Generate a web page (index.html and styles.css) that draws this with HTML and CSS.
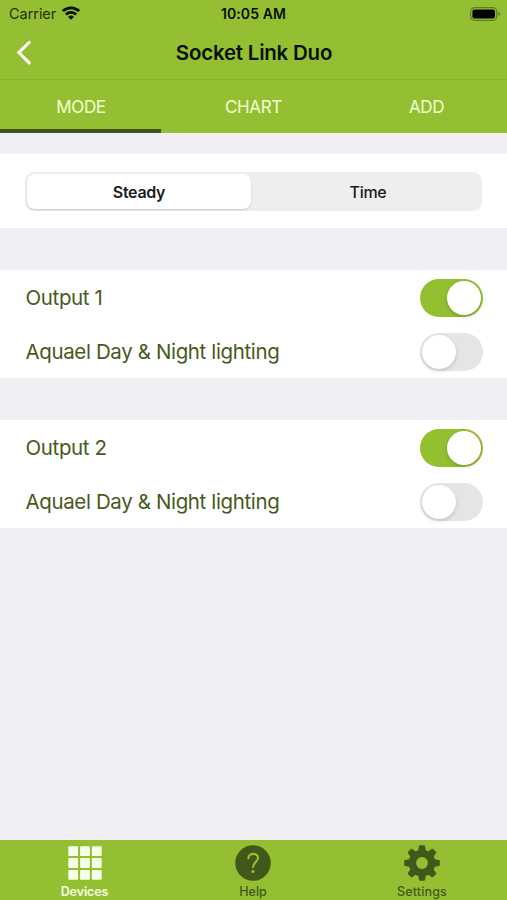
FILE: index.html
```html
<!DOCTYPE html>
<html lang="en">
<head>
<meta charset="utf-8">
<title>Socket Link Duo</title>
<link rel="stylesheet" href="styles.css">
</head>
<body>
<div class="app">
  <div class="status">
    <div class="carrier"><span>Carrier</span>
      <svg width="18" height="14" viewBox="0 0 18 14" fill="none" stroke="#071000" stroke-width="2.7"><path d="M.9 5.1a11.6 11.6 0 0 1 16.2 0M3.9 8.5a7.3 7.3 0 0 1 10.2 0"/><path d="M9 13.8 6.100 10.900a4.100 4.100 0 0 1 5.800 0z" fill="#071000" stroke="none"/></svg>
    </div>
    <div class="clock">10:05 AM</div>
    <svg class="battery" width="31" height="14" viewBox="0 0 31 14"><rect x=".7" y=".7" width="26" height="12.6" rx="3.8" fill="none" stroke="#607b22" stroke-width="1.2"/><rect x="2.4" y="2.4" width="22.6" height="9.2" rx="2" fill="#000"/><path d="M28.4 4.8c2.1.8 2.1 3.6 0 4.4z" fill="#607b22"/></svg>
  </div>
  <header class="nav">
    <svg class="back" width="18" height="26" viewBox="0 0 18 26" fill="none" stroke="#fff" stroke-width="3" stroke-linecap="round" stroke-linejoin="miter"><path d="M14.300 2.300 3.800 12.600 14.300 22.900"/></svg>
    <h1>Socket Link Duo</h1>
  </header>
  <nav class="tabs">
    <div class="tab active">MODE</div>
    <div class="tab">CHART</div>
    <div class="tab">ADD</div>
  </nav>
  <main>
    <section class="mode">
      <div class="segment"><div class="seg on">Steady</div><div class="seg time">Time</div></div>
    </section>
    <section class="group">
      <div class="row"><span>Output 1</span><i class="switch on"></i></div>
      <div class="row"><span>Aquael Day &amp; Night lighting</span><i class="switch"></i></div>
    </section>
    <section class="group">
      <div class="row"><span>Output 2</span><i class="switch on"></i></div>
      <div class="row"><span>Aquael Day &amp; Night lighting</span><i class="switch"></i></div>
    </section>
  </main>
  <footer class="bottom">
    <div class="item current">
      <svg width="36" height="36" viewBox="0 0 36 36" fill="currentColor"><rect x="1.3" y="1.3" width="9.8" height="9.8" rx="1"/><rect x="13.1" y="1.3" width="9.8" height="9.8" rx="1"/><rect x="24.9" y="1.3" width="9.8" height="9.8" rx="1"/><rect x="1.3" y="13.1" width="9.8" height="9.8" rx="1"/><rect x="13.1" y="13.1" width="9.8" height="9.8" rx="1"/><rect x="24.9" y="13.1" width="9.8" height="9.8" rx="1"/><rect x="1.3" y="24.9" width="9.8" height="9.8" rx="1"/><rect x="13.1" y="24.9" width="9.8" height="9.8" rx="1"/><rect x="24.9" y="24.9" width="9.8" height="9.8" rx="1"/></svg>
      <span class="devices">Devices</span>
    </div>
    <div class="item">
      <svg width="36" height="36" viewBox="0 0 36 36"><circle cx="18" cy="18" r="17.8" fill="currentColor"/><path d="M13.400 13.200c0-5.700 9.600-5.700 9.600-.3 0 3.900-4.900 4.300-4.900 9.200" fill="none" stroke="#95bf32" stroke-width="2.200" stroke-linecap="round"/><circle cx="18" cy="26.500" r="1.600" fill="#95bf32"/></svg>
      <span>Help</span>
    </div>
    <div class="item">
      <svg width="36" height="36" viewBox="0 0 36 36"><g fill="currentColor"><path id="teeth" d="M14 7 15 1Q15.100.2 15.900.2h4.200q.8 0 .9.800L22 7v22l-1 6q-.1.800-.9.800h-4.200q-.8 0-.9-.8L14 29z"/><use href="#teeth" transform="rotate(45 18 18)"/><use href="#teeth" transform="rotate(90 18 18)"/><use href="#teeth" transform="rotate(135 18 18)"/><circle cx="18" cy="18" r="13.300"/></g><circle cx="18" cy="18" r="5.900" fill="#95bf32"/></svg>
      <span class="settings">Settings</span>
    </div>
  </footer>
</div>
</body>
</html>
```
FILE: styles.css
```css
* { box-sizing: border-box; }
body { margin: 0; font-family: Inter, "Liberation Sans", sans-serif; background: #efeff4; }
.app { width: 507px; height: 900px; display: flex; flex-direction: column; overflow: hidden; }
svg { display: block; flex: none; }
.status { height: 27px; background: #95bf32; display: grid; grid-template-columns: 1fr auto 1fr; align-items: center; padding: 0 7px; color: #071000; font-size: 14.5px; }
.carrier { display: flex; align-items: center; gap: 6px; color: #233008; padding-left: 2px; letter-spacing: -.05px; }
.carrier svg { margin-top: -2px; }
.clock { font-weight: 600; font-size: 14px; letter-spacing: .1px; }
.battery { justify-self: end; margin-right: -1px; }
.nav { height: 53px; background: #95bf32; border-bottom: 1px solid #8bb22e; display: grid; grid-template-columns: 1fr auto 1fr; align-items: center; padding: 0 15px; }
h1 { margin: 0; grid-column: 2; font-size: 20.5px; line-height: 26px; font-weight: 600; color: #071000; letter-spacing: -.22px; padding-left: 1px; }
.tabs { height: 53px; background: #95bf32; display: grid; grid-template-columns: 161px 1fr 161px; }
.tab { color: #f0ffd0; font-size: 17px; letter-spacing: -.35px; display: flex; align-items: center; justify-content: center; border-bottom: 4px solid transparent; padding-top: 4px; }
.tab.active { border-color: #40541a; padding-left: 1px; }
main { flex: 1; padding-top: 21px; }
.mode { height: 74px; background: #fff; padding: 18px 25px 17px; }
.segment { height: 39px; background: #eee; border-radius: 9px; padding: 2px; display: grid; grid-template-columns: 224px 1fr; }
.seg { display: flex; align-items: center; justify-content: center; font-size: 16px; letter-spacing: -.3px; font-weight: 500; color: #1b1b1d; border-radius: 8px; }
.seg.on { background: #fff; font-weight: 600; box-shadow: 0 1px 2px rgba(0,0,0,.16); }
.seg.time { padding-left: 5px; }
.group { margin-top: 42px; background: #fff; }
.row { height: 54px; padding: 1px 24px 0 25.5px; display: flex; align-items: center; justify-content: space-between; font-size: 20.5px; letter-spacing: -.37px; color: #465a20; }
.switch { width: 63px; height: 38px; border-radius: 19px; padding: 2px; background: #e5e5e8; display: flex; }
.switch::before { content: ""; width: 34px; height: 34px; border-radius: 50%; background: #fff; box-shadow: 0 2px 4px rgba(0,0,0,.15); }
.switch.on { background: #93bf30; justify-content: flex-end; }
.bottom { height: 60px; background: #95bf32; display: grid; grid-template-columns: 169px 168px 170px; }
.item { display: flex; flex-direction: column; align-items: center; padding-top: 5px; color: #40591a; font-size: 12.5px; font-weight: 500; line-height: 16px; }
.item span { margin-top: 3px; }
.item .settings { letter-spacing: .15px; }
.item.current { color: #f8ffe8; }
.item .devices { font-weight: 600; letter-spacing: -.1px; }
```
